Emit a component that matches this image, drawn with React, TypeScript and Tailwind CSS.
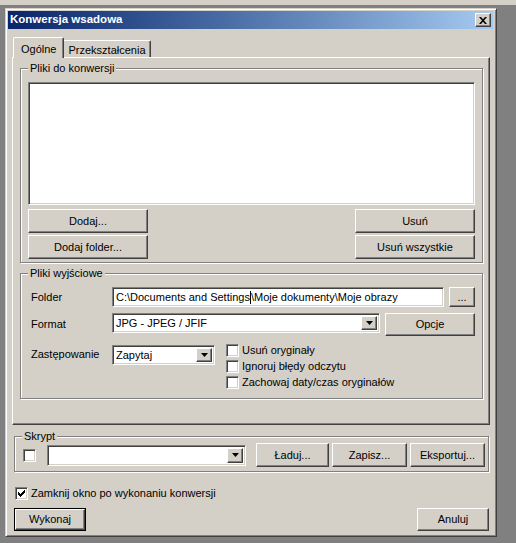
import React from 'react';

const RAISED =
  'border border-t-white border-l-white border-r-[#404040] border-b-[#404040] shadow-[inset_-1px_-1px_#808080] bg-[#d4d0c8]';
const SUNKEN =
  'border border-t-[#808080] border-l-[#808080] border-r-white border-b-white shadow-[inset_1px_1px_#404040,inset_-1px_-1px_#d4d0c8]';

function Button({ label, className = '' }: { label: string; className?: string }) {
  return (
    <div className={`${RAISED} flex items-center justify-center text-[11px] text-black ${className}`}>
      {label}
    </div>
  );
}

function Arrow() {
  return (
    <div className={`${RAISED} w-[16px] h-full flex items-center justify-center`}>
      <svg width="7" height="4" viewBox="0 0 7 4">
        <polygon points="0,0 7,0 3.5,4" fill="black" />
      </svg>
    </div>
  );
}

function Combo({ value, className = '' }: { value?: string; className?: string }) {
  return (
    <div className={`${SUNKEN} bg-white flex p-[2px] ${className}`}>
      <div className="flex-1 flex items-center pl-[1px] text-[11px] text-black">{value}</div>
      <Arrow />
    </div>
  );
}

function Check({ checked = false }: { checked?: boolean }) {
  return (
    <div className={`${SUNKEN} w-[13px] h-[13px] bg-white shrink-0 flex items-center justify-center`}>
      {checked && (
        <svg width="7" height="7" viewBox="0 0 7 7">
          <path d="M0 2h1v1h1v1h1v-1h1v-1h1v-1h1v-1h1v3h-1v1h-1v1h-1v1h-1v1h-1v-1h-1v-1h-1z" fill="black" />
        </svg>
      )}
    </div>
  );
}

function Group({ title, className = '', children }: { title: string; className?: string; children: React.ReactNode }) {
  return (
    <div className={`relative border border-[#808080] shadow-[inset_1px_1px_white,1px_1px_white] ${className}`}>
      <span className="absolute -top-[7px] left-[7px] px-[2px] bg-[#d4d0c8] text-[11px] leading-[13px] text-black">
        {title}
      </span>
      {children}
    </div>
  );
}

export default function App() {
  return (
    <div className="w-[516px] h-[543px] bg-[#808080] overflow-hidden font-['Liberation_Sans',Arial,sans-serif]">
      <div className="h-[5px] bg-[#d4d0c8]" />
      <div className="pt-[3px] pl-[5px]">
        <div className="w-[492px] h-[529px] bg-[#d4d0c8] border border-t-[#d4d0c8] border-l-[#d4d0c8] border-r-[#404040] border-b-[#404040] shadow-[inset_1px_1px_white,inset_-1px_-1px_#808080] p-[2px] flex flex-col">
          {/* Title bar */}
          <div className="h-[18px] w-[485px] flex items-center justify-between bg-gradient-to-r from-[#0a246a] to-[#a6caf0]">
            <span className="pl-[2px] text-white font-bold text-[11.5px]">Konwersja wsadowa</span>
            <div className={`${RAISED} w-[16px] h-[14px] mr-[2px] flex items-center justify-center`}>
              <svg width="8" height="7" viewBox="0 0 8 7">
                <path d="M0 0h2l2 2.3 2-2.3h2l-3 3.5 3 3.5h-2l-2-2.3-2 2.3h-2l3-3.5z" fill="black" />
              </svg>
            </div>
          </div>

          {/* Tabs */}
          <div className="mt-[8px] ml-[5px] h-[20px] flex items-end">
            <div className="relative z-10 h-[21px] -mb-[1px] px-[7px] pt-[3px] bg-[#d4d0c8] border-t border-l border-t-white border-l-white border-r border-r-[#404040] shadow-[inset_-1px_0_#808080] rounded-t-[2px] text-[11px] text-black">
              Ogólne
            </div>
            <div className="h-[17px] px-[4px] pt-[1px] border-t border-t-white border-r border-r-[#404040] shadow-[inset_-1px_0_#808080] rounded-tr-[2px] text-[11px] text-black">
              Przekształcenia
            </div>
          </div>

          {/* Panel */}
          <div className="ml-[4px] w-[478px] h-[368px] border border-t-white border-l-white border-r-[#404040] border-b-[#404040] shadow-[inset_-1px_-1px_#808080] flex flex-col">
            <Group title="Pliki do konwersji" className="mt-[10px] ml-[7px] w-[463px] h-[195px]">
              <div className="ml-[7px] mt-[13px] w-[447px] flex flex-col">
                <div className={`${SUNKEN} bg-white h-[123px]`} />
                <div className="mt-[4px] flex justify-between">
                  <Button label="Dodaj..." className="w-[120px] h-[24px]" />
                  <Button label="Usuń" className="w-[120px] h-[24px]" />
                </div>
                <div className="mt-[2px] flex justify-between">
                  <Button label="Dodaj folder..." className="w-[120px] h-[24px]" />
                  <Button label="Usuń wszystkie" className="w-[120px] h-[24px]" />
                </div>
              </div>
            </Group>

            <Group title="Pliki wyjściowe" className="mt-[10px] ml-[7px] w-[463px] h-[126px]">
              <div className="flex flex-col pl-[10px]">
                <div className="mt-[13px] flex items-center">
                  <span className="w-[81px] text-[11px] text-black">Folder</span>
                  <div className={`${SUNKEN} bg-white w-[332px] h-[20px] flex items-center pl-[3px] text-[11px] text-black whitespace-nowrap`}>
                    {'C:\\Documents and Settings'}
                    <span className="inline-block w-[1px] h-[13px] bg-black" />
                    {'\\Moje dokumenty\\Moje obrazy'}
                  </div>
                  <Button label="..." className="ml-[5px] w-[26px] h-[20px]" />
                </div>
                <div className="mt-[6px] flex items-start">
                  <span className="w-[81px] pt-[3px] text-[11px] text-black">Format</span>
                  <Combo value="JPG - JPEG / JFIF" className="w-[268px] h-[20px]" />
                  <Button label="Opcje" className="ml-[5px] w-[90px] h-[23px]" />
                </div>
                <div className="mt-[8px] flex items-start">
                  <span className="w-[81px] pt-[2px] text-[11px] text-black">Zastępowanie</span>
                  <Combo value="Zapytaj" className="mt-[1px] w-[103px] h-[20px]" />
                  <div className="ml-[11px] flex flex-col">
                    <div className="h-[16px] flex items-start">
                      <Check />
                      <span className="ml-[3px] text-[11px] leading-[13px] text-black">Usuń oryginały</span>
                    </div>
                    <div className="h-[16px] flex items-start">
                      <Check />
                      <span className="ml-[3px] text-[11px] leading-[13px] text-black">Ignoruj błędy odczytu</span>
                    </div>
                    <div className="h-[16px] flex items-start">
                      <Check />
                      <span className="ml-[3px] text-[11px] leading-[13px] text-black">Zachowaj daty/czas oryginałów</span>
                    </div>
                  </div>
                </div>
              </div>
            </Group>
          </div>

          {/* Skrypt */}
          <Group title="Skrypt" className="mt-[11px] ml-[6px] w-[475px] h-[36px]">
            <div className="mt-[6px] h-[24px] flex items-center">
              <div className="ml-[8px]">
                <Check />
              </div>
              <Combo className="ml-[11px] w-[199px] h-[21px]" />
              <Button label="Ładuj..." className="ml-[10px] w-[73px] h-[24px]" />
              <Button label="Zapisz..." className="ml-[3px] w-[75px] h-[24px]" />
              <Button label="Eksportuj..." className="ml-[3px] w-[75px] h-[24px]" />
            </div>
          </Group>

          <div className="mt-[15px] ml-[7px] flex items-center">
            <Check checked />
            <span className="ml-[3px] text-[11px] leading-[13px] text-black">Zamknij okno po wykonaniu konwersji</span>
          </div>

          <div className="mt-[8px] flex justify-between">
            <div className="ml-[6px] border border-black">
              <Button label="Wykonaj" className="w-[70px] h-[21px]" />
            </div>
            <Button label="Anuluj" className="mr-[5px] w-[72px] h-[23px]" />
          </div>
        </div>
      </div>
    </div>
  );
}
